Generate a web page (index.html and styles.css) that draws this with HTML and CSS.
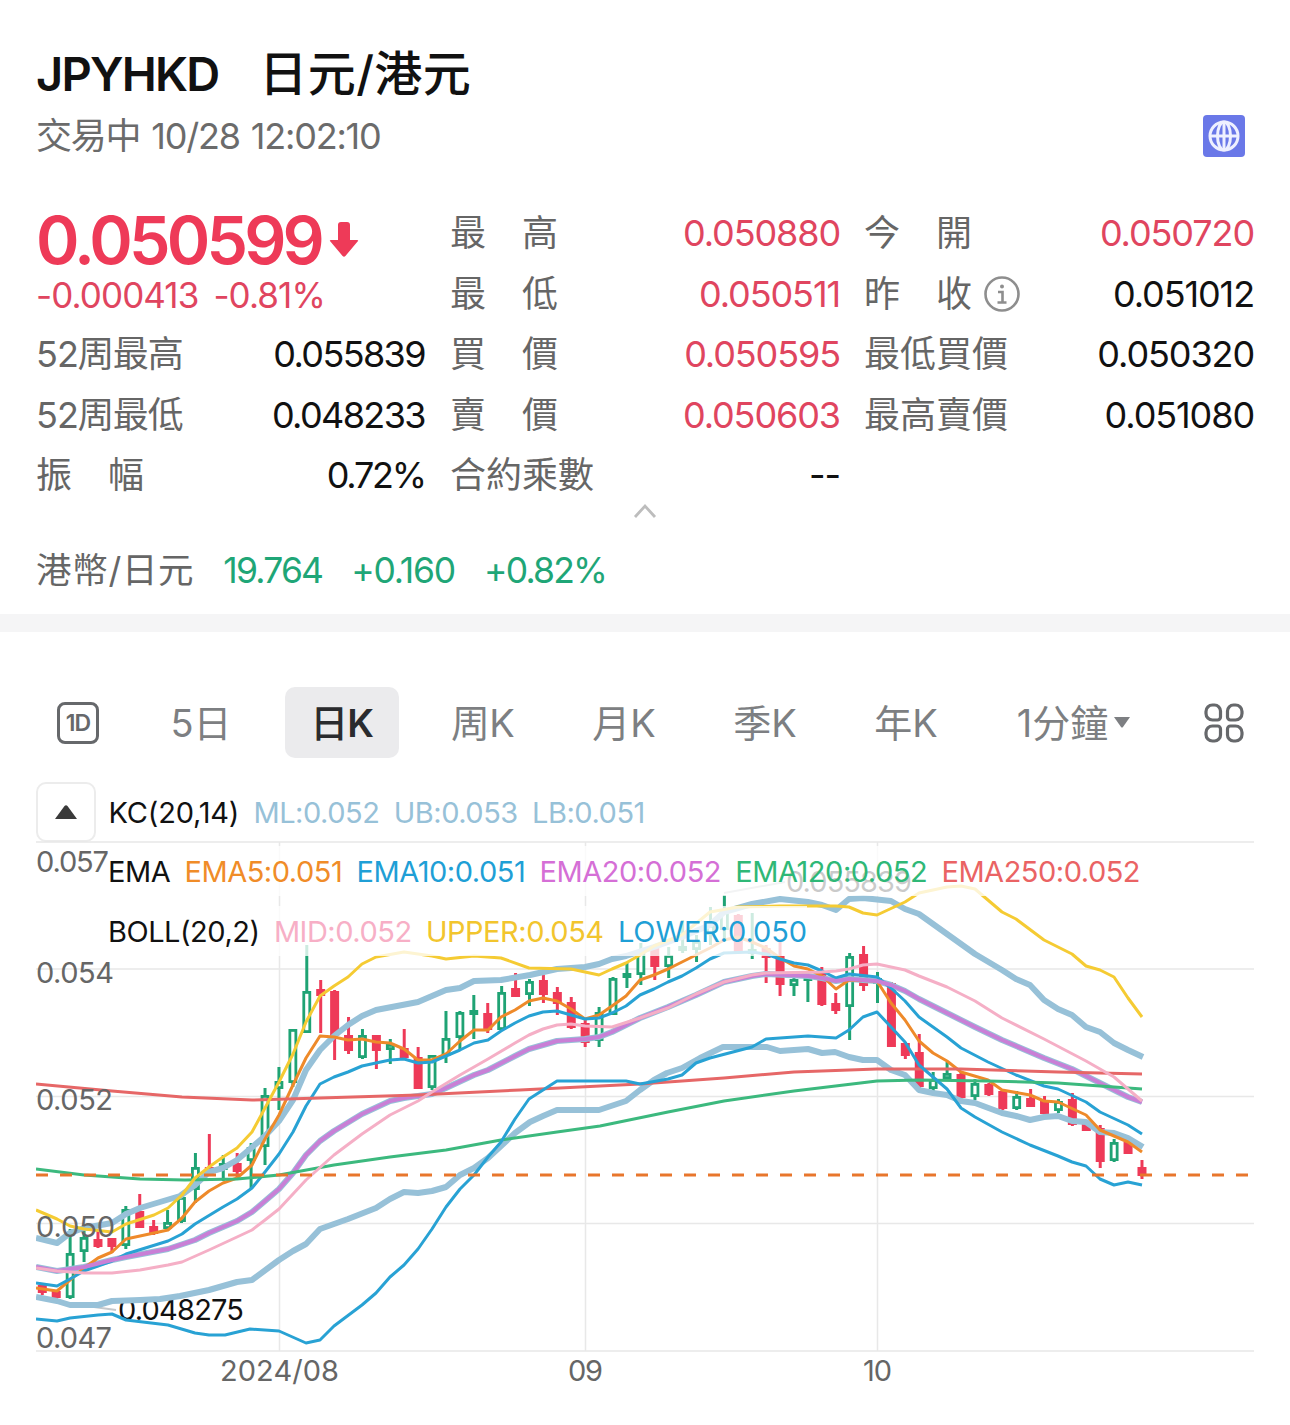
FILE: index.html
```html
<!DOCTYPE html>
<html lang="zh-HK">
<head>
  <meta charset="UTF-8">
  <meta name="viewport" content="width=device-width, initial-scale=1.0">
  <title>JPYHKD 日元/港元</title>
  <link rel="stylesheet" href="styles.css">
</head>
<body>
  <header class="header">
    <h1><span class="code">JPYHKD</span><span class="name">日元/港元</span></h1>
    <div class="status-row">
      <span class="status">交易中 10/28 12:02:10</span>
      <svg class="globe" width="42" height="42" viewBox="0 0 42 42">
        <rect width="42" height="42" rx="4" fill="#6a78e8"/>
        <g fill="none" stroke="#eef0ff" stroke-width="3">
          <circle cx="21" cy="21" r="14"/>
          <ellipse cx="21" cy="21" rx="6.500" ry="14"/>
          <path d="M7 21h28M21 7v28"/>
        </g>
      </svg>
    </div>
  </header>

  <section class="quote">
    <div class="col">
      <div class="price">
        <div class="last"><span>0.050599</span>
          <svg width="30" height="38" viewBox="0 0 30 38"><path d="M9 4q0-3 3-3h6q3 0 3 3v15h7q2 0 .6 1.600L16.400 35q-1.400 1.400-2.800 0L1.400 20.600Q0 19 2 19h7z" fill="#ee3a58"/></svg>
        </div>
        <div class="change"><span>-0.000413</span><span>-0.81%</span></div>
      </div>
      <div class="row"><span class="label week">52周最高</span><span class="value tight">0.055839</span></div>
      <div class="row"><span class="label week">52周最低</span><span class="value tight">0.048233</span></div>
      <div class="row"><span class="label">振　幅</span><span class="value percent">0.72%</span></div>
    </div>
    <div class="col">
      <div class="row"><span class="label">最　高</span><span class="value down">0.050880</span></div>
      <div class="row"><span class="label">最　低</span><span class="value down">0.050511</span></div>
      <div class="row"><span class="label">買　價</span><span class="value down">0.050595</span></div>
      <div class="row"><span class="label">賣　價</span><span class="value down">0.050603</span></div>
      <div class="row"><span class="label">合約乘數</span><span class="value">--</span></div>
    </div>
    <div class="col">
      <div class="row"><span class="label">今　開</span><span class="value down">0.050720</span></div>
      <div class="row">
        <span class="label">昨　收</span>
        <svg class="info" width="36" height="36" viewBox="0 0 36 36" fill="none" stroke="#8e8e8e">
          <circle cx="18" cy="18" r="16.500" stroke-width="2.600"/>
          <path d="M14 16h4.500v10M13.500 26.500h9" stroke-width="2.600"/>
          <circle cx="18" cy="10.500" r="2" fill="#8e8e8e" stroke="none"/>
        </svg>
        <span class="value">0.051012</span>
      </div>
      <div class="row"><span class="label">最低買價</span><span class="value">0.050320</span></div>
      <div class="row"><span class="label">最高賣價</span><span class="value">0.051080</span></div>
    </div>
  </section>

  <div class="collapse">
    <svg width="24" height="16" viewBox="0 0 24 16"><path d="M2 14L12 3l10 11" fill="none" stroke="#bdbdbd" stroke-width="2.800"/></svg>
  </div>

  <div class="inverse">
    <span class="label">港幣/日元</span>
    <span>19.764</span>
    <span class="plus">+0.160</span>
    <span>+0.82%</span>
  </div>

  <div class="divider"></div>

  <nav class="tabs">
    <span class="oneday">1D</span>
    <span class="tab">5日</span>
    <span class="tab active">日<b>K</b></span>
    <span class="tab">周K</span>
    <span class="tab">月K</span>
    <span class="tab">季K</span>
    <span class="tab">年K</span>
    <span class="tab minute">1分鐘<svg width="18" height="13" viewBox="0 0 18 13"><path d="M1 1h16L10 11q-1 1-2 0z" fill="#7d7f82"/></svg></span>
    <svg class="more" width="42" height="42" viewBox="0 0 42 42" fill="none" stroke="#66686b" stroke-width="3.200">
      <path d="M9.500 3h2a6 6 0 0 1 6 6v6a3 3 0 0 1-3 3h-5a6.500 6.500 0 0 1-6.500-6.500v-2a6.500 6.500 0 0 1 6.500-6.500z"/>
      <path d="M32.500 3h-2a6 6 0 0 0-6 6v6a3 3 0 0 0 3 3h5a6.500 6.500 0 0 0 6.500-6.500v-2a6.500 6.500 0 0 0-6.500-6.500z"/>
      <path d="M9.500 39h2a6 6 0 0 0 6-6v-6a3 3 0 0 0-3-3h-5a6.500 6.500 0 0 0-6.500 6.500v2a6.500 6.500 0 0 0 6.500 6.500z"/>
      <path d="M32.500 39h-2a6 6 0 0 1-6-6v-6a3 3 0 0 1 3-3h5a6.500 6.500 0 0 1 6.500 6.500v2a6.500 6.500 0 0 1-6.500 6.500z"/>
    </svg>
  </nav>

  <div class="kc-row">
    <span class="fold"><svg width="24" height="16" viewBox="0 0 24 16"><path d="M1 15L10.500 2q1.500-1.500 3 0L23 15z" fill="#3a3a3a"/></svg></span>
    <div class="legend kc">
      <span>KC(20,14)</span><span>ML:0.052</span><span>UB:0.053</span><span>LB:0.051</span>
    </div>
  </div>

  <div class="chart">
    <svg id="kline" width="1218" height="560" viewBox="36 841 1218 560">
      <g class="grid">
        <path d="M36 842H1254M36 969H1254M36 1096.500H1254M36 1223.500H1254M36 1351H1254M279.500 842V1351M585.500 842V1351M877.500 842V1351"/>
      </g>
      <path class="leader" d="M72 1304L116 1310M724 893L785 882"/>
      <text class="mark" x="118" y="1320" textLength="126">0.048275</text>
      <text class="mark" x="786" y="892" textLength="126">0.055839</text>
      <g id="candles"></g>
      <g id="lines"></g>
      <path class="now" d="M36 1175H1254"/>
      <g class="dates">
        <text x="279.500" y="1381" textLength="119">2024/08</text>
        <text x="585.500" y="1381" textLength="35">09</text>
        <text x="877.500" y="1381" textLength="29">10</text>
      </g>
    </svg>
    <div class="overlay">
      <div class="legend ema">
        <span>EMA</span><span>EMA5:0.051</span><span>EMA10:0.051</span><span>EMA20:0.052</span><span>EMA120:0.052</span><span>EMA250:0.052</span>
      </div>
      <div class="legend boll">
        <span>BOLL(20,2)</span><span>MID:0.052</span><span>UPPER:0.054</span><span>LOWER:0.050</span>
      </div>
    </div>
    <svg class="axis" width="100" height="530" viewBox="36 841 100 530">
      <text x="36" y="872" textLength="73">0.057</text>
      <text x="36" y="983" textLength="78">0.054</text>
      <text x="36" y="1110" textLength="77">0.052</text>
      <text x="36" y="1237" textLength="79">0.050</text>
      <text x="36" y="1348" textLength="76">0.047</text>
    </svg>
  </div>
  <script src="chart.js"></script>
</body>
</html>
```
FILE: styles.css
```css
* {
  box-sizing: border-box;
}

body {
  margin: 0;
  width: 1290px;
  height: 1425px;
  overflow: hidden;
  background: #fff;
  color: #111;
  font-family: Inter, "Noto Sans CJK TC", sans-serif;
}

svg {
  display: block;
  flex: none;
}

.header {
  padding: 42px 45px 0 36px;
}

h1 {
  display: flex;
  gap: 41px;
  margin: 0;
  height: 64px;
  line-height: 64px;
  font-size: 47px;
  font-weight: 600;
  white-space: nowrap;
}

.code {
  letter-spacing: -1.8px;
}

.name {
  font-size: 48px;
  font-weight: 500;
  letter-spacing: 0.4px;
}

.status-row {
  display: flex;
  justify-content: space-between;
  align-items: center;
  height: 60px;
}

.status {
  padding-bottom: 6px;
  font-size: 36px;
  letter-spacing: -1.2px;
  word-spacing: 2px;
  color: #6b6b6b;
}

.quote {
  display: grid;
  grid-template-columns: repeat(3, 388px);
  column-gap: 26px;
  padding: 37px 37px 0 36px;
}

.row {
  display: flex;
  align-items: center;
  height: 60.5px;
  font-size: 36px;
  white-space: nowrap;
}

.label {
  padding-bottom: 6px;
  color: #666;
}

.week {
  letter-spacing: -1px;
}

.value {
  margin-left: auto;
  margin-right: -2px;
  letter-spacing: -1.1px;
}

.tight {
  margin-right: -1px;
  letter-spacing: -1.6px;
}

.percent {
  margin-right: -1px;
  letter-spacing: -2.2px;
}

.down {
  color: #e0455f;
}

.info {
  margin-left: 12px;
}

.price {
  height: 121px;
  color: #ee3a58;
}

.last {
  display: flex;
  align-items: center;
  gap: 8px;
  height: 74px;
  line-height: 70px;
  font-size: 66px;
  font-weight: 600;
  letter-spacing: -3.8px;
}

.change {
  display: flex;
  gap: 15px;
  height: 36px;
  line-height: 36px;
  font-size: 35px;
  letter-spacing: -0.9px;
  color: #e0455f;
}

.collapse {
  display: flex;
  justify-content: center;
  height: 35px;
}

.collapse svg {
  margin-top: -3px;
}

.inverse {
  display: flex;
  align-items: center;
  gap: 29px;
  height: 60px;
  padding: 0 36px;
  font-size: 35.5px;
  letter-spacing: -1.8px;
  color: #1fa677;
}

.inverse .label {
  letter-spacing: 0.7px;
}

.inverse .plus {
  letter-spacing: -1.2px;
}

.divider {
  height: 18px;
  margin-top: 13.5px;
  background: #f5f5f6;
}

.tabs {
  display: flex;
  align-items: center;
  height: 71px;
  margin-top: 55px;
  padding: 0 45px 0 57px;
  font-size: 38px;
  color: #7d7f82;
}

.oneday {
  width: 42px;
  height: 42px;
  margin-right: 45px;
  border: 3px solid #66686b;
  border-radius: 8px;
  font-size: 23px;
  font-weight: 600;
  line-height: 36px;
  text-align: center;
  letter-spacing: -1px;
  color: #66686b;
}

.tab {
  display: flex;
  justify-content: center;
  align-items: center;
  width: 114px;
  height: 71px;
  margin-right: 27px;
  padding-bottom: 5px;
  border-radius: 10px;
}

.active {
  align-items: baseline;
  padding-top: 6px;
  background: #ebebed;
  color: #2a2b2e;
  font-weight: 500;
}

.active b {
  font-weight: 600;
  margin-left: -1px;
}

.minute {
  gap: 5px;
  width: 116px;
  margin-left: 26px;
}

.minute svg {
  margin-top: 5px;
}

.more {
  margin-left: auto;
}

.kc-row {
  display: flex;
  height: 83px;
  padding: 24px 36px 0;
}

.fold {
  display: flex;
  justify-content: center;
  align-items: center;
  width: 60px;
  height: 60px;
  margin-right: 12.5px;
  border: 2px solid #ececec;
  border-radius: 10px;
}

.legend {
  display: flex;
  align-items: center;
  gap: 14.3px;
  height: 50px;
  font-size: 29px;
  letter-spacing: -0.48px;
  white-space: nowrap;
}

.kc {
  margin-top: 5px;
  color: #97c1d8;
}

.legend span:first-child {
  color: #111;
}

.kc span:first-child {
  letter-spacing: -0.2px;
}

.chart {
  position: relative;
  margin: 0 36px;
}

.overlay {
  position: absolute;
  left: 72px;
  top: 5px;
  display: flex;
  flex-direction: column;
  align-items: flex-start;
  gap: 10px;
}

.overlay .legend {
  padding-top: 1px;
  background: rgba(255, 255, 255, 0.78);
}

.ema span:nth-child(2) { color: #f08c28; }
.ema span:nth-child(3) { color: #1f9fd6; }
.ema span:nth-child(4) { color: #d56fd6; }
.ema span:nth-child(5) { color: #2fb877; }
.ema span:nth-child(6) { color: #ea6364; }

.boll span:nth-child(2) { color: #f7afc6; }
.boll span:nth-child(3) { color: #f2c52e; }
.boll span:nth-child(4) { color: #1f9fd6; letter-spacing: -0.1px; }

.axis {
  position: absolute;
  left: 0;
  top: 0;
}

.axis text,
.dates text {
  font-size: 29px;
  fill: #666;
}

.dates text {
  text-anchor: middle;
}

.mark {
  font-size: 29px;
  fill: #111;
}

.grid path {
  fill: none;
  stroke: #e8e8e8;
  stroke-width: 1.5;
}

.leader {
  fill: none;
  stroke: #c4c8cb;
  stroke-width: 2;
}

.now {
  fill: none;
  stroke: #e8762c;
  stroke-width: 3;
  stroke-dasharray: 12 12;
}

#lines polyline {
  fill: none;
  stroke-linejoin: round;
}
```
FILE: chart.js
```js
const NS = 'http://www.w3.org/2000/svg';
const STEP = 13.92;
const UP = '#1fa374';
const DOWN = '#ee3a58';

// high, body top, body bottom, low, 1 = up
const candles = [
  [1283,1285,1293,1295,0],[1290,1291,1298,1299,0],[1229,1253,1298,1299,1],[1231,1237,1252,1262,1],
  [1231,1239,1247,1248,0],[1238,1238,1247,1253,0],[1206,1209,1246,1249,1],[1194,1211,1228,1228,0],
  [1220,1226,1234,1235,0],[1210,1222,1229,1230,1],[1196,1197,1222,1223,1],[1153,1167,1190,1203,1],
  [1134,1167,1170,1175,0],[1155,1163,1170,1181,1],[1153,1163,1172,1177,0],[1143,1147,1161,1189,1],
  [1088,1095,1147,1165,1],[1067,1081,1089,1110,1],[1029,1029,1083,1087,1],[945,991,1033,1033,1],
  [980,989,996,1033,0],[990,991,1036,1060,0],[1017,1035,1051,1054,0],[1029,1035,1058,1059,1],
  [1035,1035,1051,1069,0],[1039,1044,1050,1064,1],[1029,1048,1058,1058,0],[1047,1057,1089,1089,0],
  [1055,1055,1088,1090,1],[1011,1038,1056,1063,1],[1011,1012,1038,1050,1],[995,1010,1015,1039,1],
  [1003,1013,1030,1033,0],[986,992,1030,1031,1],[973,988,997,997,0],[979,981,995,1006,1],
  [975,980,995,1003,0],[987,992,1004,1015,0],[997,1002,1028,1029,0],[1019,1023,1043,1047,0],
  [1007,1012,1041,1047,1],[977,978,1015,1015,1],[963,973,978,988,1],[943,950,975,985,1],
  [946,948,967,980,0],[947,955,967,978,1],[920,946,951,953,1],[935,941,950,962,1],
  [907,925,935,945,1],[895,910,930,940,1],[914,915,952,952,0],[913,949,954,959,1],
  [945,948,958,983,0],[942,956,985,996,0],[978,979,986,996,1],[973,977,981,1002,1],
  [967,973,1005,1006,0],[993,1003,1011,1014,0],[953,956,1007,1040,1],[946,954,986,991,0],
  [972,978,984,1003,1],[982,983,1047,1047,0],[1042,1043,1056,1059,0],[1034,1052,1087,1092,0],
  [1072,1079,1089,1091,1],[1062,1073,1079,1080,1],[1071,1074,1098,1099,0],[1079,1083,1097,1100,1],
  [1083,1084,1095,1096,0],[1089,1091,1109,1110,0],[1091,1096,1109,1110,1],[1089,1098,1107,1107,0],
  [1096,1101,1114,1114,0],[1099,1101,1111,1113,1],[1093,1099,1125,1126,0],[1122,1123,1131,1131,0],
  [1125,1128,1162,1168,0],[1139,1142,1161,1162,1],[1141,1142,1154,1154,0],[1160,1167,1176,1179,0]
];

const ema20 = '36,1267 57,1271 84,1267 112,1260 126,1257 168,1249 195,1240 209,1233 237,1221 252,1212 265,1201 279,1189 293,1173 306,1155 320,1141 334,1131 362,1114 390,1101 404,1098 432,1094 446,1088 474,1075 488,1070 515,1056 529,1049 557,1041 585,1039 599,1037 612,1032 640,1018 668,1007 696,995 724,982 752,976 766,974 808,976 822,978 836,981 849,979 877,981 891,985 905,991 919,999 947,1013 975,1027 1002,1040 1044,1058 1072,1069 1100,1083 1128,1097 1142,1102';

// color, width, points
const lines = [
  // KC
  ['#97c1d8', 6, ema20],
  ['#97c1d8', 6, '36,1238 57,1243 70,1233 84,1228 112,1223 126,1214 140,1208 180,1196 195,1185 209,1172 223,1168 237,1160 250,1149 265,1136 279,1121 293,1100 306,1070 320,1050 334,1036 348,1025 362,1016 376,1010 418,1002 446,990 460,988 474,981 501,980 530,975 557,969 585,967 599,964 612,959 626,956 654,947 682,937 710,925 724,912 752,904 780,899 808,902 822,905 836,910 849,899 863,898 891,901 905,909 919,914 975,954 1002,970 1016,979 1030,985 1044,1000 1058,1009 1072,1015 1086,1027 1100,1032 1114,1043 1128,1050 1143,1057'],
  ['#97c1d8', 6, '36,1297 57,1301 70,1305 98,1305 112,1301 140,1300 160,1299 180,1296 209,1290 237,1282 252,1280 279,1260 293,1251 306,1244 320,1229 348,1219 376,1208 390,1199 404,1192 418,1193 432,1191 446,1187 460,1175 474,1168 488,1158 501,1146 515,1133 530,1122 543,1116 557,1110 599,1110 626,1101 640,1090 654,1080 667,1073 682,1068 700,1058 723,1047 767,1047 780,1051 808,1049 822,1053 835,1052 849,1057 863,1060 877,1060 891,1070 905,1075 919,1090 933,1093 947,1095 961,1101 975,1103 1002,1113 1016,1116 1030,1120 1044,1117 1058,1116 1072,1121 1086,1122 1100,1132 1114,1133 1128,1138 1143,1147'],
  // EMA5, EMA10, EMA20, EMA120, EMA250
  ['#ee8a2a', 3, '36,1288 57,1291 70,1280 84,1268 98,1258 112,1252 126,1239 140,1236 168,1230 182,1218 195,1202 209,1191 223,1183 237,1178 252,1165 265,1139 279,1115 293,1085 306,1058 320,1036 334,1037 348,1040 362,1039 376,1042 390,1043 404,1049 418,1060 432,1060 446,1054 460,1041 474,1030 488,1030 501,1017 515,1010 529,1001 543,998 557,1001 571,1009 585,1019 599,1015 612,1006 626,996 640,980 654,975 668,969 682,962 696,955 710,948 724,940 738,937 752,942 766,948 780,958 794,966 808,969 822,976 836,989 849,980 877,981 891,1003 905,1020 919,1041 933,1053 947,1061 961,1072 988,1080 1002,1090 1030,1095 1044,1101 1058,1102 1086,1115 1100,1130 1128,1142 1142,1152'],
  ['#28a2d4', 3, '36,1283 57,1286 70,1279 84,1271 98,1266 112,1261 126,1254 168,1241 182,1234 195,1224 223,1207 237,1199 252,1188 265,1172 279,1154 293,1132 306,1106 320,1084 334,1077 348,1072 362,1066 390,1060 404,1059 418,1063 432,1062 446,1056 460,1050 474,1043 488,1040 501,1031 515,1023 529,1016 543,1012 557,1011 571,1015 585,1019 599,1018 612,1013 626,1006 640,995 654,989 668,982 682,976 696,968 710,959 724,953 752,952 766,954 780,959 794,963 808,965 822,971 836,978 849,974 877,977 891,988 905,1001 919,1017 947,1037 961,1048 988,1062 1016,1075 1044,1086 1058,1089 1086,1102 1100,1112 1128,1125 1142,1134'],
  ['#c97fd6', 4, ema20],
  ['#3cb97e', 3, '36,1169 84,1175 140,1179 185,1180 237,1179 279,1175 334,1165 390,1157 446,1150 501,1140 557,1132 600,1126 668,1112 724,1101 794,1091 877,1081 919,1080 988,1081 1058,1083 1114,1087 1142,1089'],
  ['#e66767', 3, '36,1084 112,1091 182,1097 252,1100 320,1098 418,1095 520,1090 640,1084 724,1078 794,1072 877,1069 961,1069 1058,1072 1142,1074'],
  // BOLL mid, upper, lower
  ['#f5afc6', 3, '36,1268 57,1271 84,1273 112,1273 140,1270 168,1265 182,1262 209,1250 237,1237 252,1230 265,1220 279,1209 306,1180 334,1155 362,1134 390,1115 418,1101 432,1092 460,1075 488,1059 515,1043 529,1035 543,1029 557,1025 571,1024 585,1026 612,1027 640,1018 668,1008 696,994 724,982 752,975 766,973 822,972 836,971 849,969 863,965 877,964 905,970 919,976 947,987 975,1001 1002,1018 1044,1039 1086,1061 1114,1077 1142,1101'],
  ['#f5cb33', 3, '36,1210 57,1219 70,1226 84,1229 112,1232 126,1224 154,1215 168,1208 182,1195 195,1178 209,1167 223,1157 237,1148 252,1132 265,1108 279,1082 293,1054 306,1022 320,996 334,986 348,977 362,964 376,957 404,952 432,956 446,959 474,956 501,958 529,968 571,969 599,975 612,969 626,963 640,955 654,946 682,935 710,912 738,907 780,906 836,906 849,907 863,913 877,915 905,902 919,893 947,887 961,886 975,889 1002,912 1016,919 1044,940 1072,954 1086,966 1100,970 1114,977 1128,998 1142,1017'],
  ['#28a2d4', 3, '36,1319 57,1321 70,1318 98,1315 112,1314 126,1320 168,1325 195,1333 209,1335 225,1335 250,1329 279,1331 306,1343 320,1340 334,1326 362,1305 376,1293 390,1277 404,1265 418,1249 432,1229 446,1207 460,1189 474,1175 488,1157 501,1142 515,1119 529,1099 543,1090 557,1081 599,1081 626,1081 640,1084 668,1079 682,1075 696,1063 710,1058 752,1047 766,1039 808,1036 836,1038 849,1030 863,1017 877,1012 891,1027 905,1042 919,1065 947,1089 961,1108 975,1117 1002,1132 1030,1145 1058,1156 1072,1162 1086,1166 1100,1179 1114,1185 1128,1182 1142,1185']
];

function add(parent, tag, attrs) {
  const el = document.createElementNS(NS, tag);
  for (const k in attrs) el.setAttribute(k, attrs[k]);
  parent.appendChild(el);
}

const cg = document.getElementById('candles');
candles.forEach(([h, t, b, l, up], i) => {
  const x = 42.3 + i * STEP;
  const c = up ? UP : DOWN;
  add(cg, 'path', { d: `M${x} ${h}V${t}M${x} ${b}V${l}`, stroke: c, 'stroke-width': 3 });
  // hollow body for an up day, solid for a down day
  if (up) {
    add(cg, 'rect', { x: x - 3, y: t + 1.4, width: 6, height: Math.max(b - t - 2.8, 1), fill: '#fff', stroke: c, 'stroke-width': 2.8 });
  } else {
    add(cg, 'rect', { x: x - 4.5, y: t, width: 9, height: b - t, fill: c });
  }
});

const lg = document.getElementById('lines');
lines.forEach(([color, width, points]) => {
  add(lg, 'polyline', { points, stroke: color, 'stroke-width': width });
});
```
